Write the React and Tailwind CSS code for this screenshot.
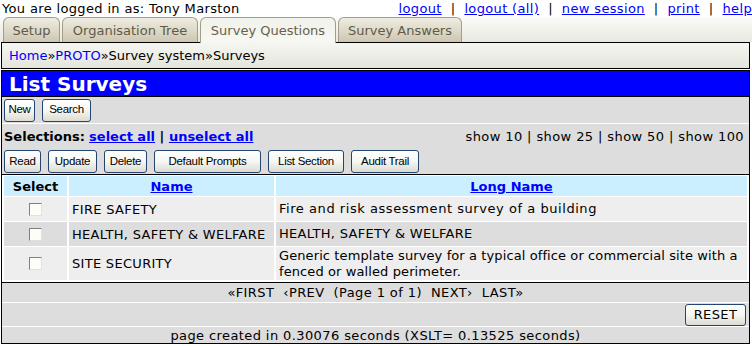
import React from "react";

const tabs = [
  { label: "Setup", w: "w-[57px]" },
  { label: "Organisation Tree", w: "w-[136px]" },
  { label: "Survey Questions", w: "w-[136px]", active: true },
  { label: "Survey Answers", w: "w-[124px]" },
];

const rows = [
  {
    name: "FIRE SAFETY",
    long: ["Fire and risk assessment survey of a building"],
    bg: "bg-[#eeeeee]",
    h: "h-[24px]",
    tr: "tracking-[0.55px]",
  },
  {
    name: "HEALTH, SAFETY & WELFARE",
    long: ["HEALTH, SAFETY & WELFARE"],
    bg: "bg-[#dddddd]",
    h: "h-[24px]",
    tr: "tracking-[0.3px]",
  },
  {
    name: "SITE SECURITY",
    long: ["Generic template survey for a typical office or commercial site with a", "fenced or walled perimeter."],
    bg: "bg-[#eeeeee]",
    h: "h-[33px]",
    tr: "tracking-[0.1px]",
  },
];

function Btn({ label, w }) {
  return (
    <button
      className={`${w} h-[23px] rounded-[3px] border border-[#24456f] bg-gradient-to-b from-[#ffffff] via-[#f6f6f2] to-[#dcdcd4] font-['Liberation_Sans',Arial,sans-serif] text-[11.5px] tracking-[-0.3px] text-black`}
    >
      {label}
    </button>
  );
}

function CheckBox() {
  return (
    <div className="w-[13px] h-[13px] border border-t-[#808080] border-l-[#808080] border-b-[#e0e0e0] border-r-[#e0e0e0] bg-[#fdfdf8]" />
  );
}

export default function App() {
  return (
    <div className="w-[752px] h-[346px] bg-white text-black font-['DejaVu_Sans',Verdana,sans-serif] text-[13px] leading-none overflow-hidden">
      {/* top line */}
      <div className="flex justify-between items-center h-[17px] pl-[2px] tracking-[0.35px]">
        <span>You are logged in as: Tony Marston</span>
        <span className="whitespace-nowrap">
          <a className="text-[#0000ff] underline">logout</a>
          <span> &nbsp;|&nbsp; </span>
          <a className="text-[#0000ff] underline">logout (all)</a>
          <span> &nbsp;|&nbsp; </span>
          <a className="text-[#0000ff] underline">new session</a>
          <span> &nbsp;|&nbsp; </span>
          <a className="text-[#0000ff] underline">print</a>
          <span> &nbsp;|&nbsp; </span>
          <a className="text-[#0000ff] underline">help</a>
        </span>
      </div>

      {/* tabs */}
      <div className="flex items-end gap-[2px] h-[25px] pl-[3px] bg-gradient-to-b from-[#fbfbf8] to-[#e8e8e0]">
        {tabs.map((t) =>
          t.active ? (
            <div
              key={t.label}
              className={`${t.w} h-[26px] -mb-px z-10 flex items-center justify-center rounded-t-[6px] border border-b-0 border-[#a49c86] bg-gradient-to-b from-[#f2f2ec] to-[#f7f8f3] text-[#6a6048]`}
            >
              {t.label}
            </div>
          ) : (
            <div
              key={t.label}
              className={`${t.w} h-[25px] flex items-center justify-center rounded-t-[6px] border border-b-0 border-[#a49c86] bg-gradient-to-b from-[#efede2] to-[#cdc7b1] text-[#615947]`}
            >
              {t.label}
            </div>
          )
        )}
      </div>

      {/* breadcrumb */}
      <div className="ml-[1px] w-[749px] h-[27px] border border-black bg-gradient-to-b from-[#f5f6f1] to-[#e4e5db] flex items-center pl-[7px]">
        <a className="text-[#0000ff]">Home</a>
        <span>»</span>
        <a className="text-[#0000ff]">PROTO</a>
        <span>»Survey system»Surveys</span>
      </div>

      {/* main */}
      <div className="mt-[1px] ml-[1px] w-[749px] border border-black bg-[#dddddd] flex flex-col">
        <div className="h-[26px] bg-[#0000ff] border-b border-black flex items-center pl-[7px]">
          <span className="text-white font-bold text-[20px]">List Surveys</span>
        </div>

        <div className="h-[27px] border-b border-white flex items-center gap-[7px] pl-[2px]">
          <Btn label="New" w="w-[31px]" />
          <Btn label="Search" w="w-[49px]" />
        </div>

        <div className="h-[50px] flex flex-col">
          <div className="h-[25px] flex items-center justify-between pl-[2px] pr-[5px]">
            <div className="flex items-center">
              <span className="font-bold">Selections:</span>
              <span>&nbsp;</span>
              <a className="text-[#0000ff] underline font-bold">select all</a>
              <span className="font-bold">&nbsp;|&nbsp;</span>
              <a className="text-[#0000ff] underline font-bold">unselect all</a>
            </div>
            <span className="tracking-[0.4px]">show 10 | show 25 | show 50 | show 100</span>
          </div>
          <div className="flex items-center gap-[7px] pl-[2px] pt-[1px]">
            <Btn label="Read" w="w-[37px]" />
            <Btn label="Update" w="w-[49px]" />
            <Btn label="Delete" w="w-[43px]" />
            <Btn label="Default Prompts" w="w-[107px]" />
            <Btn label="List Section" w="w-[76px]" />
            <Btn label="Audit Trail" w="w-[68px]" />
          </div>
        </div>

        {/* table */}
        <div className="border-t border-b border-black bg-white px-[2px] pt-[1px] pb-[2px]">
          <div className="grid grid-cols-[63px_205px_471px] gap-x-[2px] gap-y-[1px]">
            <div className="h-[20px] bg-[#ccefff] flex items-center justify-center font-bold">Select</div>
            <div className="h-[20px] bg-[#ccefff] flex items-center justify-center font-bold text-[#0000ff] underline">Name</div>
            <div className="h-[20px] bg-[#ccefff] flex items-center justify-center font-bold text-[#0000ff] underline">Long Name</div>
            {rows.map((r) => (
              <React.Fragment key={r.name}>
                <div className={`${r.h} ${r.bg} flex items-center justify-center`}>
                  <CheckBox />
                </div>
                <div className={`${r.h} ${r.bg} flex items-center pl-[3px] whitespace-nowrap tracking-[0.3px]`}>{r.name}</div>
                <div className={`${r.h} ${r.bg} ${r.tr} flex flex-col justify-center pl-[3px] leading-[16px] whitespace-nowrap overflow-hidden`}>
                  {r.long.map((l) => (
                    <span key={l}>{l}</span>
                  ))}
                </div>
              </React.Fragment>
            ))}
          </div>
        </div>

        <div className="h-[20px] border-b border-white flex items-center justify-center whitespace-pre tracking-[0.4px]">
          {"«FIRST  ‹PREV  (Page 1 of 1)  NEXT›  LAST»"}
        </div>

        <div className="h-[24px] border-b border-white flex items-center justify-end pr-[3px]">
          <button className="w-[61px] h-[22px] rounded-[3px] border border-[#24456f] bg-gradient-to-b from-[#ffffff] via-[#f6f6f2] to-[#dcdcd4] text-[13px] tracking-[0.4px] text-black">
            RESET
          </button>
        </div>

        <div className="h-[16px] flex items-center justify-center tracking-[0.4px]">
          page created in 0.30076 seconds (XSLT= 0.13525 seconds)
        </div>
      </div>
    </div>
  );
}
